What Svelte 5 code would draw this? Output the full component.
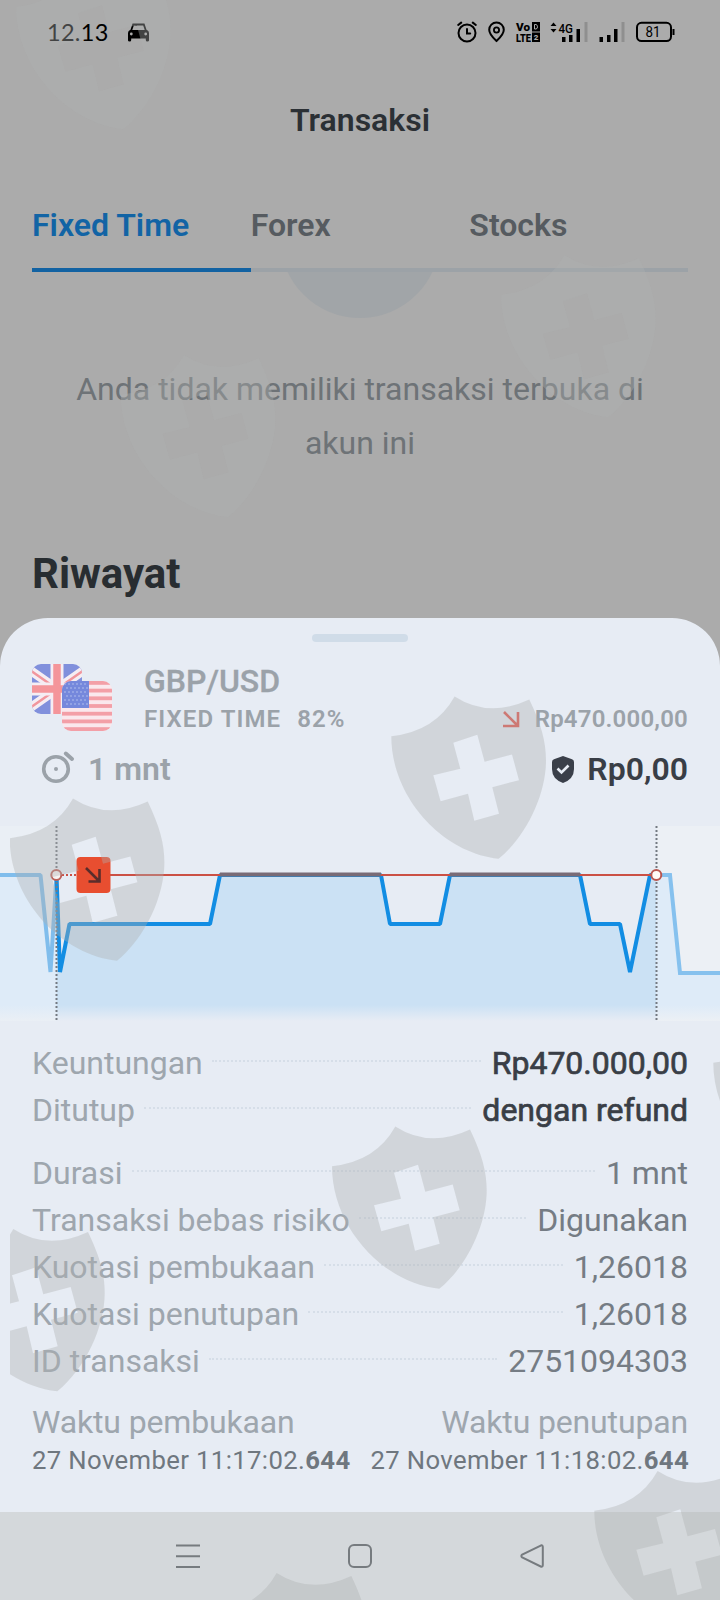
<script>
    const tabs = ["Fixed Time", "Forex", "Stocks"];
    let activeTab = "Fixed Time";

    const result = [
        { label: "Keuntungan", value: "Rp470.000,00" },
        { label: "Ditutup", value: "dengan refund" },
    ];

    const details = [
        { label: "Durasi", value: "1 mnt" },
        { label: "Transaksi bebas risiko", value: "Digunakan" },
        { label: "Kuotasi pembukaan", value: "1,26018" },
        { label: "Kuotasi penutupan", value: "1,26018" },
        { label: "ID transaksi", value: "2751094303" },
    ];

    const times = [
        { label: "Waktu pembukaan", date: "27 November 11:17:02.", ms: "644" },
        { label: "Waktu penutupan", date: "27 November 11:18:02.", ms: "644" },
    ];

    // quote line, before / during / after the trade
    const before = "0,49 40.5,49 50.5,146 56.5,49";
    const during = "56.5,49 60,146 69.5,98 210,98 220,49 381,49 390,98 440,98 450,49 580,49 590,98 620,98 630,146 650,49 656,49";
    const after = "656,49 670,49 680,147 720,147";

    const stars = [];
    for (let y = 0; y < 6; y++) {
        for (let x = 0; x < 6; x++) {
            stars.push({ x: 3 + x * 4 + (y % 2) * 2, y: 3 + y * 4 });
        }
    }

    const shields = [
        [16, -33],
        [501, 255],
        [120.7, 355],
        [391.3, 696.5],
        [9.7, 798.5],
        [713.3, 1023],
        [332, 1126.5],
        [-50, 1229],
        [594.3, 1471],
        [213.3, 1573],
    ];
</script>

<div class="screen">
    <div class="home">
        <div class="status">
            <span class="clock">12.13</span>
            <svg class="car" width="23" height="19" viewBox="0 0 23 19">
                <path d="M4 8 L6.200 1.500 H16.800 L19 8" fill="none" stroke="#000" stroke-width="1.800" />
                <path d="M3 7 H20 Q22 8 22 10 V17.500 Q22 18.500 20.300 18.500 Q18.800 18.500 18.800 17 V15.500 H4.200 V17 Q4.200 18.500 2.700 18.500 Q1 18.500 1 17.500 V10 Q1 8 3 7Z" fill="#000" />
                <circle cx="4.300" cy="11" r="1.400" fill="#ababab" />
                <circle cx="18.700" cy="11" r="1.400" fill="#ababab" />
            </svg>
            <div class="status-icons">
                <svg width="20" height="22" viewBox="0 0 20 22">
                    <g fill="none" stroke="#000" stroke-width="2" stroke-linecap="round">
                        <circle cx="10" cy="12" r="8.500" />
                        <path d="M10 8 V12.500 H13.200 M1.200 4 L4.200 1.600 M15.800 1.600 L18.800 4" />
                    </g>
                </svg>
                <svg class="pin" width="17" height="22" viewBox="0 0 17 22">
                    <path d="M8.500 20 Q1.200 13.500 1.200 8.800 A7.300 7.300 0 0 1 15.800 8.800 Q15.800 13.500 8.500 20Z" fill="none" stroke="#000" stroke-width="2" />
                    <circle cx="8.500" cy="9" r="2.600" fill="none" stroke="#000" stroke-width="1.800" />
                </svg>
                <svg class="volte" width="25" height="22" viewBox="0 0 25 22">
                    <text x="0" y="9.500" textLength="14" lengthAdjust="spacingAndGlyphs">Vo</text>
                    <text x="0" y="21" textLength="15" lengthAdjust="spacingAndGlyphs">LTE</text>
                    <rect x="16" y="1" width="8" height="9.500" />
                    <rect x="16" y="11.500" width="8" height="9.500" />
                    <path d="M18.500 3.500 H20 Q21.500 4 21.500 5.800 Q21.500 7.800 20 8 H18.500Z" fill="none" stroke="#ababab" stroke-width="1" />
                    <text class="sim" x="17.800" y="19.400">2</text>
                </svg>
                <svg class="signal" width="38" height="22" viewBox="0 0 38 22">
                    <path d="M0.500 5 L3.500 1.500 L6.500 5Z M0.500 8 L3.500 11.500 L6.500 8Z" />
                    <text x="8.500" y="11.500" textLength="14.500" lengthAdjust="spacingAndGlyphs">4G</text>
                    <path d="M12 16 h3.500 v5 h-3.500Z M19 14 h3.500 v7 h-3.500Z M26.500 8 h3.500 v13 h-3.500Z" />
                    <path d="M34.500 1 h3 v20 h-3Z" fill="#8f8f8f" />
                </svg>
                <svg class="signal2" width="26" height="22" viewBox="0 0 26 22">
                    <path d="M0.500 16 h3.500 v5 h-3.500Z M8 14 h3.500 v7 h-3.500Z M15 8 h3.500 v13 h-3.500Z" />
                    <path d="M22.500 1 h3 v20 h-3Z" fill="#8f8f8f" />
                </svg>
                <svg class="battery" width="39" height="22" viewBox="0 0 39 22">
                    <rect x="1" y="1.800" width="34" height="18.200" rx="4.500" fill="none" stroke="#000" stroke-width="2" />
                    <path d="M36.500 8 H38.500 V14 H36.500Z" />
                    <text x="9.500" y="16" textLength="15" lengthAdjust="spacingAndGlyphs">81</text>
                </svg>
            </div>
        </div>

        <h1>Transaksi</h1>

        <div class="tabs">
            {#each tabs as tab}
                <button class:active={tab === activeTab} on:click={() => (activeTab = tab)}>{tab}</button>
            {/each}
        </div>

        <div class="empty">
            <div class="avatar-clip"><div class="avatar"></div></div>
            <p>Anda tidak memiliki transaksi terbuka di akun ini</p>
        </div>

        <h2>Riwayat</h2>
    </div>

    <div class="sheet">
        <div class="handle"></div>

        <div class="head">
            <svg class="flags" width="80" height="68" viewBox="0 0 80 68">
                <defs>
                    <clipPath id="flag"><rect width="50" height="50" rx="9" /></clipPath>
                </defs>
                <g clip-path="url(#flag)">
                    <rect width="50" height="50" fill="#8190dc" />
                    <path d="M-8 2 L58 48 M-8 48 L58 2" stroke="#f5edf3" stroke-width="9" />
                    <path d="M-8 2 L58 48 M-8 48 L58 2" stroke="#f1969d" stroke-width="2.500" />
                    <path d="M25 0 V50 M0 25 H50" stroke="#f5edf3" stroke-width="13" />
                    <path d="M25 0 V50 M0 25 H50" stroke="#f4959a" stroke-width="7.500" />
                </g>
                <g transform="translate(30 17)">
                    <g clip-path="url(#flag)">
                        <rect width="50" height="50" fill="#fae8ed" />
                        {#each [0, 1, 2, 3, 4, 5, 6] as i}
                            <rect y={i * 7.7} width="50" height="3.8" fill="#f39fa7" />
                        {/each}
                        <rect width="27" height="27" fill="#7588dc" />
                        {#each stars as s}
                            <circle cx={s.x} cy={s.y} r="0.8" fill="#b8c3f0" />
                        {/each}
                    </g>
                </g>
            </svg>
            <div class="pair">
                <div class="name">GBP/USD</div>
                <div class="kind"><span>FIXED TIME</span><span>82%</span></div>
            </div>
            <div class="stake">
                <svg width="18" height="18" viewBox="0 0 18 18">
                    <path d="M2 2 L16 16 M1 16 H16 V2" fill="none" stroke="#e0584f" stroke-width="2.600" />
                </svg>
                <span>Rp470.000,00</span>
            </div>
        </div>

        <div class="summary">
            <svg class="timer" width="34" height="34" viewBox="0 0 34 34">
                <g fill="none" stroke="#9ba2a9" stroke-linecap="round">
                    <circle cx="15" cy="19" r="12.300" stroke-width="3.600" />
                    <path d="M24.800 3.600 L31 9" stroke-width="4" />
                </g>
                <circle cx="15" cy="19" r="2" fill="#9ba2a9" />
            </svg>
            <span class="duration">1 mnt</span>
            <svg class="guard" width="22" height="27" viewBox="0 0 22 27">
                <path d="M11 0 L20 3.200 Q22 4 22 6 V13 Q22 23 11 27 Q0 23 0 13 V6 Q0 4 2 3.200Z" fill="#3a3f49" />
                <path d="M5.500 12.500 L9.500 16.500 L16.500 9.500" fill="none" stroke="#e7ecf4" stroke-width="2.600" />
            </svg>
            <span class="profit">Rp0,00</span>
        </div>

        <svg class="chart" width="720" height="197" viewBox="0 0 720 197">
            <defs>
                <linearGradient id="fill" x1="0" y1="49" x2="0" y2="195" gradientUnits="userSpaceOnUse">
                    <stop offset="0.89" stop-color="#cbe1f4" />
                    <stop offset="1" stop-color="#cbe1f4" stop-opacity="0" />
                </linearGradient>
                <linearGradient id="fill-out" x1="0" y1="49" x2="0" y2="195" gradientUnits="userSpaceOnUse">
                    <stop offset="0.89" stop-color="#deebf8" />
                    <stop offset="1" stop-color="#deebf8" stop-opacity="0" />
                </linearGradient>
            </defs>
            <rect width="56" height="195" fill="#eaeff5" />
            <rect x="657" width="63" height="195" fill="#ecf0f5" />
            <polygon points="{before} 56.5,195 0,195" fill="url(#fill-out)" />
            <polygon points="{after} 720,195 656,195" fill="url(#fill-out)" />
            <polygon points="{during} 656,195 56.5,195" fill="url(#fill)" />
            <g fill="none" stroke-width="4">
                <polyline points={before} stroke="#80bdec" stroke-linejoin="bevel" />
                <polyline points={after} stroke="#86c1ee" />
                <polyline points={during} stroke="#128de3" stroke-linejoin="bevel" />
            </g>
            <path d="M110 49 H656" stroke="#cb5045" stroke-width="2" />
            <path d="M220 48.500 H381 M450 48.500 H580" stroke="#796b76" stroke-width="4" />
            <path d="M62 49 H77" stroke="#cb5045" stroke-width="2" stroke-dasharray="2 2" />
            <path d="M56.500 0 V194 M656.500 0 V194" stroke="#747a82" stroke-width="2" stroke-dasharray="2 2" />
            <circle cx="56.300" cy="49" r="5" fill="#f7f3f2" stroke="#bd6159" stroke-width="2" />
            <circle cx="656.300" cy="49" r="5" fill="#fffaf6" stroke="#b9564f" stroke-width="2" />
            <rect x="76.500" y="31" width="34" height="36" rx="4" fill="#e84e30" />
            <path d="M86 42 L99 55 M88.500 55.500 H99.500 V43" fill="none" stroke="#5a2d2b" stroke-width="2.600" />
        </svg>

        <div class="rows result">
            {#each result as row}
                <div class="row"><span>{row.label}</span><i></i><b>{row.value}</b></div>
            {/each}
        </div>
        <div class="rows">
            {#each details as row}
                <div class="row"><span>{row.label}</span><i></i><b>{row.value}</b></div>
            {/each}
        </div>

        <div class="times">
            {#each times as time}
                <div class="time">
                    <div class="time-label">{time.label}</div>
                    <div class="date">{time.date}<b>{time.ms}</b></div>
                </div>
            {/each}
        </div>
    </div>

    <div class="nav">
        <svg width="24" height="24" viewBox="0 0 24 24"><path d="M0 1.500 H24 M0 12.300 H24 M0 23 H24" /></svg>
        <svg width="24" height="24" viewBox="0 0 24 24"><rect x="1" y="1" width="22" height="22" rx="5" /></svg>
        <svg width="24" height="24" viewBox="0 0 24 24"><path d="M21.200 1.300 L2.200 10.600 Q0.500 12 2.200 13.400 L21.200 22.700 Q22.800 23 22.800 21 V3 Q22.800 1 21.200 1.300Z" /></svg>
    </div>

    <svg class="watermark" width="720" height="1600" viewBox="0 0 720 1600">
        <clipPath id="inset"><rect x="10" width="710" height="1600" /></clipPath>
        <g clip-path="url(#inset)">
            {#each shields as [x, y]}
                <path
                    transform="translate({x} {y})"
                    fill-rule="evenodd"
                    d="M63.300 0 Q97.500 22 138 3 C150 28 154.700 45 154.700 64 C154.700 98 135 140 107.300 162.300 C50 156 0 100 0 39.700 Q44 35 63.300 0Z M62 46.300 L86 38.300 L93.300 65.300 L120.700 58 L127.700 83.700 L101 90.700 L107.700 117.300 L83 124.300 L76.700 97.300 L49.300 104.700 L42 78.700 L69 72.300Z"
                />
            {/each}
        </g>
    </svg>
</div>

<style>
    :global(body) {
        margin: 0;
    }

    .screen {
        position: relative;
        width: 720px;
        height: 1600px;
        overflow: hidden;
        background: #ababab;
        font-family: Roboto, "Liberation Sans", sans-serif;
        font-size: 32px;
        color: #9ea6ae;
    }

    svg {
        display: block;
        flex-shrink: 0;
    }

    .home {
        height: 618px;
    }

    .status {
        display: flex;
        align-items: center;
        height: 64px;
        padding: 0 45px 0 47px;
    }

    .clock {
        margin-top: -1px;
        font-family: Lato, sans-serif;
        font-size: 23.5px;
        letter-spacing: 0.3px;
        color: #000;
    }

    .car {
        margin-left: 18px;
    }

    .status-icons {
        display: flex;
        margin-left: auto;
        font-family: Roboto, sans-serif;
    }

    .pin {
        margin-left: 11px;
    }

    .volte {
        margin-left: 11px;
        overflow: visible;
        font-size: 11.5px;
        font-weight: 900;
    }

    .sim {
        font-size: 8px;
        fill: #ababab;
    }

    .signal {
        margin-left: 9px;
        font-size: 13px;
        font-weight: 500;
    }

    .signal2 {
        margin-left: 11px;
    }

    .battery {
        margin-left: 11px;
        font-size: 14px;
    }

    h1 {
        margin: 24px 0 0;
        font-size: 32px;
        font-weight: 600;
        line-height: 64px;
        text-align: center;
        color: #2b3035;
    }

    .tabs {
        display: flex;
        margin: 53px 32px 0;
    }

    button {
        flex: 1;
        padding: 0 0 23px;
        border: 0;
        border-bottom: 4px solid #9ca2a7;
        background: none;
        font: 600 32px/40px Roboto, sans-serif;
        text-align: left;
        color: #565b60;
    }

    button.active {
        color: #1264a5;
        border-color: #1262a2;
    }

    .avatar-clip {
        height: 46px;
        overflow: hidden;
        display: flex;
        align-items: flex-end;
        justify-content: center;
    }

    .avatar {
        flex-shrink: 0;
        width: 160px;
        height: 160px;
        border-radius: 50%;
        background: #a1a5a8;
    }

    .empty p {
        width: 600px;
        margin: 44px auto 0;
        line-height: 54px;
        text-align: center;
        color: #6e7377;
    }

    h2 {
        margin: 74px 32px 0;
        font-size: 42px;
        font-weight: 700;
        line-height: 60px;
        color: #282d31;
    }

    .sheet {
        height: 894px;
        box-sizing: border-box;
        padding-top: 16px;
        border-radius: 48px 48px 0 0;
        background: #e7ecf4;
    }

    .handle {
        width: 96px;
        height: 8px;
        margin: 0 auto;
        border-radius: 4px;
        background: #d0dce8;
    }

    .head {
        display: flex;
        margin: 22px 32px 0;
        height: 72px;
    }

    .pair {
        margin-left: 32px;
        font-weight: 500;
        color: #9ba2a9;
    }

    .name {
        line-height: 34px;
        -webkit-text-stroke: 0.3px #9ba2a9;
    }

    .kind {
        display: flex;
        gap: 16px;
        margin-top: 4px;
        font-size: 24px;
        font-weight: 600;
        line-height: 34px;
        letter-spacing: 1.1px;
    }

    .stake {
        display: flex;
        align-items: center;
        gap: 15px;
        height: 34px;
        margin: 38px 0 0 auto;
        font-size: 24px;
        font-weight: 600;
        letter-spacing: 0.2px;
        color: #9ba2a9;
    }

    .summary {
        display: flex;
        align-items: center;
        height: 40px;
        margin: 13px 32px 0 41px;
        font-weight: 600;
    }

    .timer {
        margin-top: -5px;
    }

    .duration {
        margin-left: 13px;
        color: #9ba2a9;
    }

    .guard {
        margin-left: auto;
    }

    .profit {
        margin-left: 13px;
        color: #393e46;
    }

    .chart {
        margin-top: 37px;
    }

    .rows {
        padding: 0 32px;
    }

    .rows.result {
        margin: 17px 0 16px;
    }

    .row {
        display: flex;
        line-height: 47px;
    }

    .row i {
        flex: 1;
        height: 0;
        margin: 20px 11px 0 9px;
        border-top: 2px dotted #d6dee8;
    }

    .row b {
        font-weight: 400;
        color: #757c84;
    }

    .result b {
        color: #393e46;
        -webkit-text-stroke: 0.7px #393e46;
    }

    .times {
        display: flex;
        justify-content: space-between;
        margin: 17px 31px 0 32px;
    }

    .time:last-child {
        text-align: right;
    }

    .time-label {
        line-height: 40px;
        letter-spacing: -0.15px;
    }

    .time:last-child .time-label {
        margin-right: 1px;
    }

    .date {
        font-size: 25.7px;
        line-height: 37px;
        letter-spacing: 0.37px;
        color: #6f777f;
    }

    .date b {
        font-weight: 700;
    }

    .nav {
        display: flex;
        justify-content: space-between;
        height: 56px;
        padding: 32px 176px 0;
        background: #d4d8db;
    }

    .nav svg {
        fill: none;
        stroke: #767b7f;
        stroke-width: 2;
    }

    .watermark {
        position: absolute;
        top: 0;
        left: 0;
        pointer-events: none;
        fill: rgba(174, 175, 176, 0.38);
    }
</style>
